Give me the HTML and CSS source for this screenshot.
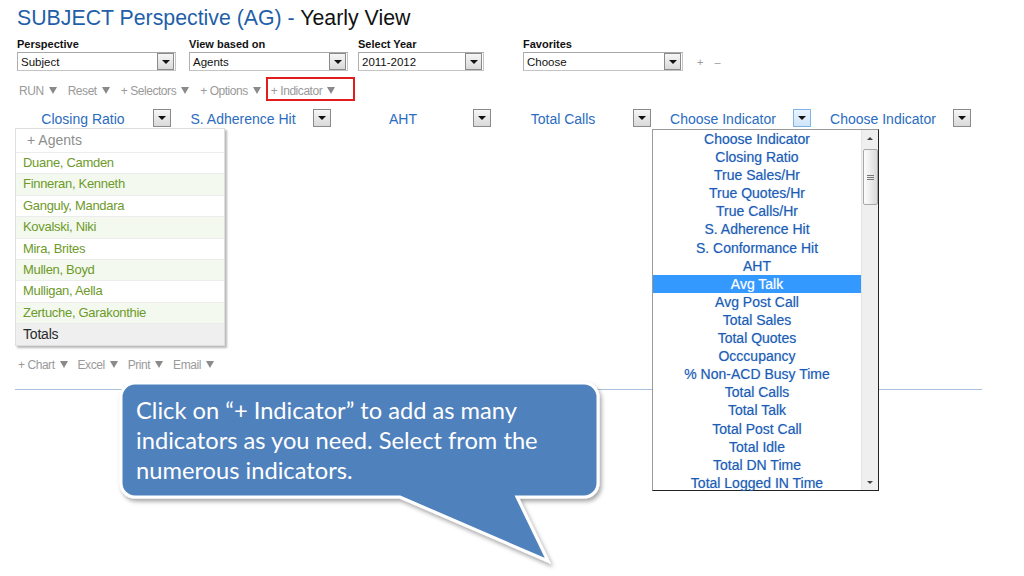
FILE: index.html
```html
<!DOCTYPE html>
<html>
<head>
<meta charset="utf-8">
<link rel="stylesheet" href="styles.css">
</head>
<body>
<div class="page">
  <h1 class="title"><span class="t-blue">SUBJECT Perspective (AG) - </span><span class="t-black">Yearly View</span></h1>

  <div class="filters">
    <div class="field f-persp">
      <div class="flabel">Perspective</div>
      <div class="sel"><span class="sel-text">Subject</span><span class="sel-btn"><i class="tri"></i></span></div>
    </div>
    <div class="field f-view">
      <div class="flabel">View based on</div>
      <div class="sel"><span class="sel-text">Agents</span><span class="sel-btn"><i class="tri"></i></span></div>
    </div>
    <div class="field f-year">
      <div class="flabel">Select Year</div>
      <div class="sel"><span class="sel-text">2011-2012</span><span class="sel-btn"><i class="tri"></i></span></div>
    </div>
    <div class="field f-fav">
      <div class="flabel">Favorites</div>
      <div class="sel"><span class="sel-text">Choose</span><span class="sel-btn"><i class="tri"></i></span></div>
    </div>
    <div class="fav-actions"><span>+</span><span>&ndash;</span></div>
  </div>

  <div class="toolbar">
    <span class="tb-item">RUN<i class="dn"></i></span>
    <span class="tb-item">Reset<i class="dn"></i></span>
    <span class="tb-item">+ Selectors<i class="dn"></i></span>
    <span class="tb-item">+ Options<i class="dn"></i></span>
    <span class="tb-item hl">+ Indicator<i class="dn"></i></span>
  </div>

  <div class="cols">
    <div class="col"><span class="col-label">Closing Ratio</span><span class="col-btn"><i class="tri"></i></span></div>
    <div class="col"><span class="col-label">S. Adherence Hit</span><span class="col-btn"><i class="tri"></i></span></div>
    <div class="col"><span class="col-label">AHT</span><span class="col-btn"><i class="tri"></i></span></div>
    <div class="col"><span class="col-label">Total Calls</span><span class="col-btn"><i class="tri"></i></span></div>
    <div class="col open"><span class="col-label">Choose Indicator</span><span class="col-btn active"><i class="tri"></i></span>
      <div class="dropdown">
        <ul class="dd-list">
          <li>Choose Indicator</li>
          <li>Closing Ratio</li>
          <li>True Sales/Hr</li>
          <li>True Quotes/Hr</li>
          <li>True Calls/Hr</li>
          <li>S. Adherence Hit</li>
          <li>S. Conformance Hit</li>
          <li>AHT</li>
          <li class="sel-item">Avg Talk</li>
          <li>Avg Post Call</li>
          <li>Total Sales</li>
          <li>Total Quotes</li>
          <li>Occcupancy</li>
          <li>% Non-ACD Busy Time</li>
          <li>Total Calls</li>
          <li>Total Talk</li>
          <li>Total Post Call</li>
          <li>Total Idle</li>
          <li>Total DN Time</li>
          <li>Total Logged IN Time</li>
        </ul>
        <div class="scrollbar">
          <span class="sb-up"></span>
          <span class="sb-thumb"><i></i><i></i><i></i></span>
          <span class="sb-down"></span>
        </div>
      </div>
    </div>
    <div class="col"><span class="col-label">Choose Indicator</span><span class="col-btn"><i class="tri"></i></span></div>
  </div>

  <div class="agents">
    <div class="ag-head">+ Agents</div>
    <div class="ag-row">Duane, Camden</div>
    <div class="ag-row alt">Finneran, Kenneth</div>
    <div class="ag-row">Ganguly, Mandara</div>
    <div class="ag-row alt">Kovalski, Niki</div>
    <div class="ag-row">Mira, Brites</div>
    <div class="ag-row alt">Mullen, Boyd</div>
    <div class="ag-row">Mulligan, Aella</div>
    <div class="ag-row alt">Zertuche, Garakonthie</div>
    <div class="ag-total">Totals</div>
  </div>

  <div class="toolbar bottom">
    <span class="tb-item">+ Chart<i class="dn"></i></span>
    <span class="tb-item">Excel<i class="dn"></i></span>
    <span class="tb-item">Print<i class="dn"></i></span>
    <span class="tb-item">Email<i class="dn"></i></span>
  </div>

  <div class="rule"></div>
</div>

<div class="callout">
  <svg class="callout-shape" width="500" height="195" viewBox="0 0 500 195">
    <defs>
      <filter id="sh" x="-10%" y="-10%" width="120%" height="130%">
        <feDropShadow dx="2" dy="3" stdDeviation="2" flood-color="#000" flood-opacity="0.35"/>
      </filter>
    </defs>
    <path d="M 20 6 H 469 A 14 14 0 0 1 483 20 V 106 A 14 14 0 0 1 469 120 H 402 L 433 184 L 285 120 H 20 A 14 14 0 0 1 6 106 V 20 A 14 14 0 0 1 20 6 Z" fill="#4f81bd" stroke="#ffffff" stroke-width="3" stroke-linejoin="miter" filter="url(#sh)"/>
  </svg>
  <p class="callout-text">Click on “+ Indicator” to add as many indicators as you need. Select from the numerous indicators.</p>
</div>
</body>
</html>
```

FILE: styles.css
```css
* { box-sizing: border-box; }
html, body { margin: 0; padding: 0; background: #ffffff; }
body {
  width: 1024px;
  height: 576px;
  overflow: hidden;
  position: relative;
  font-family: "Liberation Sans", Arial, sans-serif;
}
.page { padding: 6px 0 0 15px; }

.title {
  margin: 0 0 0 2px;
  font-size: 21.3px;
  line-height: 24px;
  font-weight: normal;
}
.t-blue { color: #1f5fa9; }
.t-black { color: #111111; }

/* filters */
.filters { display: flex; align-items: flex-end; margin-top: 8px; margin-left: 2px; }
.field { display: flex; flex-direction: column; }
.f-persp { width: 159px; }
.f-view { width: 159px; margin-left: 13px; }
.f-year { width: 126px; margin-left: 10px; }
.f-fav { width: 160px; margin-left: 39px; }
.flabel { font-size: 11px; font-weight: bold; line-height: 12px; color: #111; height: 14px; }
.sel {
  height: 19px;
  border: 1px solid #c4c4c4;
  border-top-color: #a8a8a8;
  border-left-color: #b0b0b0;
  background: #fff;
  display: flex;
  align-items: center;
  justify-content: space-between;
  padding: 0 1px 0 3px;
}
.sel-text { font-size: 11.5px; color: #111; }
.sel-btn, .col-btn {
  width: 17px;
  height: 17px;
  border: 1px solid #8a8a8a;
  background: linear-gradient(#f6f6f6, #d9d9d9);
  display: flex;
  align-items: center;
  justify-content: center;
}
.tri {
  display: block;
  width: 0; height: 0;
  border-left: 4px solid transparent;
  border-right: 4px solid transparent;
  border-top: 4px solid #111;
}
.fav-actions { display: flex; gap: 11px; margin-left: 14px; height: 19px; align-items: center; font-size: 11px; color: #9a9a9a; }

/* toolbar */
.toolbar {
  display: flex;
  align-items: center;
  height: 24px;
  margin-top: 6px;
  margin-left: 4px;
  padding-top: 3px;
  font-size: 12px;
  color: #9a9a9a;
  letter-spacing: -0.45px;
}
.tb-item { display: flex; align-items: center; margin-right: 11px; white-space: pre; }
.dn {
  display: inline-block;
  width: 0; height: 0;
  margin-left: 5px;
  border-left: 4px solid transparent;
  border-right: 4px solid transparent;
  border-top: 7px solid #8a8a8a;
}
.tb-item.hl {
  height: 24px;
  margin-top: -3px;
  margin-left: -6px;
  padding: 3px 18px 0 3px;
  border: 2px solid #e11d1d;
}

/* column headers */
.cols { display: flex; margin-top: 8px; margin-left: -4px; height: 18px; }
.col { width: 160px; display: flex; align-items: center; position: relative; }
.col-label { flex: 1; text-align: center; font-size: 14px; color: #2b6cc0; line-height: 18px; padding-top: 2px; padding-left: 2px; }
.col-btn { width: 18px; height: 18px; }
.col-btn.active { border-color: #7fb2e6; background: linear-gradient(#e9f4fd, #cfe5fa); }

/* dropdown */
.dropdown {
  position: absolute;
  left: 1px;
  top: 20px;
  width: 227px;
  height: 362px;
  background: #fff;
  border: 1px solid #9a9a9a;
  border-right-color: #222;
  border-bottom-color: #222;
  display: flex;
  z-index: 5;
}
.dd-list {
  list-style: none;
  margin: 0;
  padding: 0;
  flex: 1;
}
.dd-list li {
  height: 18.1px;
  line-height: 18.1px;
  text-align: center;
  font-size: 14px;
  color: #1d5db5;
  text-shadow: 0 0 1px rgba(40, 100, 190, 0.45);
  white-space: nowrap;
}
.dd-list li.sel-item { background: #3399ff; color: #fff; text-shadow: 0 0 1px rgba(255,255,255,0.5); }
.scrollbar {
  width: 17px;
  background: #efefef;
  border-left: 1px solid #e4e4e4;
  display: flex;
  flex-direction: column;
  align-items: center;
}
.sb-up {
  margin-top: 7px;
  width: 0; height: 0;
  border-left: 3px solid transparent;
  border-right: 3px solid transparent;
  border-bottom: 3px solid #444;
}
.sb-thumb {
  margin-top: 9px;
  width: 15px;
  height: 56px;
  border: 1px solid #a8a8a8;
  border-radius: 2px;
  background: linear-gradient(90deg, #fdfdfd, #dadada);
  display: flex;
  flex-direction: column;
  align-items: center;
  justify-content: center;
  gap: 1px;
}
.sb-thumb i { display: block; width: 7px; height: 1px; background: #777; }
.sb-down {
  margin-top: auto;
  margin-bottom: 6px;
  width: 0; height: 0;
  border-left: 3px solid transparent;
  border-right: 3px solid transparent;
  border-top: 3px solid #444;
}

/* agents */
.agents {
  width: 210px;
  margin-top: 1px;
  border: 1px solid #dedede;
  box-shadow: 2px 2px 2px rgba(0, 0, 0, 0.28);
  background: #fff;
}
.ag-head {
  height: 23px;
  line-height: 23px;
  padding-left: 11px;
  font-size: 14px;
  color: #8e8e8e;
}
.ag-row, .ag-total {
  height: 21.4px;
  line-height: 20.4px;
  border-top: 1px solid #ececec;
  padding-left: 7px;
  font-size: 13px;
  letter-spacing: -0.3px;
  color: #6e9a2a;
}
.ag-row.alt { background: #f3f9ee; }
.ag-total { background: #efefef; color: #2a2a2a; font-size: 14px; height: 22px; line-height: 21px; letter-spacing: -0.2px; }

.toolbar.bottom { margin-top: 10px; margin-left: 3px; height: 16px; padding-top: 1px; }
.toolbar.bottom .tb-item { margin-right: 10px; }

.rule { margin-top: 17px; width: 967px; height: 1px; background: #a9c0dc; }

/* callout */
.callout { position: absolute; left: 115px; top: 377px; width: 500px; height: 195px; }
.callout-shape { position: absolute; left: 0; top: 0; }
.callout-text {
  position: absolute;
  left: 21px;
  top: 18px;
  width: 455px;
  margin: 0;
  font-family: Lato, "Open Sans", sans-serif;
  font-size: 23.7px;
  line-height: 30px;
  color: #ffffff;
}
```
